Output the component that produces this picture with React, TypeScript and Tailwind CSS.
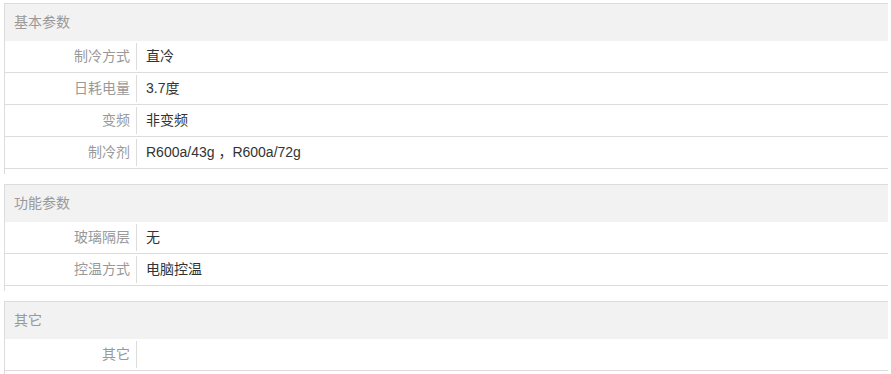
const groups = [
  {
    title: '基本参数',
    rows: [
      ['制冷方式', '直冷'],
      ['日耗电量', '3.7度'],
      ['变频', '非变频'],
      ['制冷剂', 'R600a/43g ，R600a/72g'],
    ],
  },
  {
    title: '功能参数',
    rows: [
      ['玻璃隔层', '无'],
      ['控温方式', '电脑控温'],
    ],
  },
  {
    title: '其它',
    rows: [['其它', '']],
  },
];

export default function App() {
  return (
    <div
      className="bg-white pt-[3px] pl-[4px] pr-[3px] text-[14px] w-[891px] h-[374px] overflow-hidden"
      style={{ fontFamily: '"Liberation Sans", "Noto Sans CJK SC", sans-serif' }}
    >
      {groups.map((group) => (
        <div key={group.title} className="border-t border-l border-[#dcdcdc] pb-[5px] mb-[10px]">
          <div className="h-[37px] bg-[#f2f2f2] pl-[9px] flex items-center text-[#999]">{group.title}</div>
          {group.rows.map(([label, value]) => (
            <div key={label} className="flex h-[32px] border-b border-[#dcdcdc]">
              <div className="w-[132px] my-[2px] border-r border-[#dcdcdc] pr-[6px] flex items-center justify-end text-[#999]">
                {label}
              </div>
              <div className="pl-[9px] flex items-center text-[#333]">{value}</div>
            </div>
          ))}
        </div>
      ))}
    </div>
  );
}
